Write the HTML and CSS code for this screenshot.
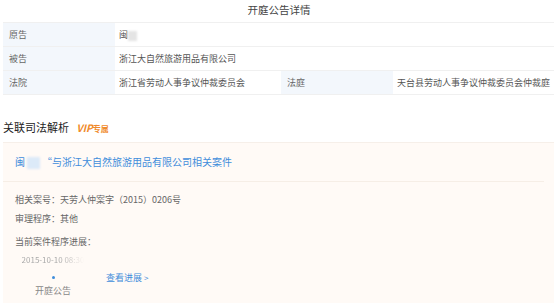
FILE: index.html
```html
<!DOCTYPE html>
<html lang="zh-CN">
<head>
    <meta charset="UTF-8">
    <title>开庭公告详情</title>
    <link rel="stylesheet" href="styles.css">
</head>
<body>
    <h1 class="page-title">开庭公告详情</h1>

    <!-- Party / court table -->
    <div class="info-table">
        <div class="cell label">原告</div>
        <div class="cell value wide">闽<span class="blur"></span></div>

        <div class="cell label">被告</div>
        <div class="cell value wide">浙江大自然旅游用品有限公司</div>

        <div class="cell label">法院</div>
        <div class="cell value">浙江省劳动人事争议仲裁委员会</div>
        <div class="cell label">法庭</div>
        <div class="cell value">天台县劳动人事争议仲裁委员会仲裁庭</div>
    </div>

    <h2 class="section-title">关联司法解析 <span class="vip">VIP<small>专属</small></span></h2>

    <div class="case-card">
        <div class="case-head">闽<span class="blur blue"></span>“与浙江大自然旅游用品有限公司相关案件</div>
        <div class="case-body">
            <p class="line">相关案号：天劳人仲案字（2015）0206号</p>
            <p class="line">审理程序：其他</p>
            <p class="line progress">当前案件程序进展：</p>
            <div class="timeline">
                <div class="step">
                    <span class="date">2015-10-10 08:30</span>
                    <span class="dot"></span>
                    <span class="step-name">开庭公告</span>
                </div>
                <a class="more" href="#">查看进展 <span class="arrow">&gt;</span></a>
            </div>
        </div>
    </div>
</body>
</html>
```

FILE: styles.css
```css
:root {
    --text-color: #333333;
    --muted-color: #666666;
    --line-color: #f0f0f0;
    --label-bg: #f3f7fc;
    --link-color: #3f8ddb;
    --vip-color: #f08a2b;
    --card-bg: #fffaf6;
}

body {
    margin: 0;
    padding: 0 0 0 3px;
    font-family: "Noto Sans CJK SC", "Noto Sans", sans-serif;
    color: var(--text-color);
    background: #ffffff;
    width: 551px;
    overflow: hidden;
}

/* Page heading */
.page-title {
    margin: 0;
    height: 22px;
    line-height: 19px;
    text-align: center;
    font-size: 10.5px;
    font-weight: normal;
    color: #444444;
    padding-left: 1px;
}

/* Info table */
.info-table {
    display: grid;
    grid-template-columns: 112px 166px 112px 1fr;
    border-top: 1px solid var(--line-color);
}

.cell {
    height: 23px;
    line-height: 23px;
    font-size: 9px;
    border-bottom: 1px solid var(--line-color);
    white-space: nowrap;
    overflow: hidden;
}

.label {
    background: var(--label-bg);
    color: var(--muted-color);
    padding-left: 6px;
}

.value {
    color: #555555;
    padding-left: 4px;
}

.wide {
    grid-column: span 3;
}

.blur {
    display: inline-block;
    width: 9px;
    height: 10px;
    vertical-align: middle;
    background: #e4e4e4;
    filter: blur(1px);
}

.blur.blue {
    width: 13px;
    height: 12px;
    margin: 0 2px;
    background: #dceaf8;
}

/* Section heading */
.section-title {
    margin: 23px 0 0;
    height: 24px;
    line-height: 18px;
    font-size: 11px;
    font-weight: normal;
    color: #222222;
}

.vip {
    margin-left: 5px;
    color: var(--vip-color);
    font-weight: bold;
    font-style: italic;
    font-size: 10px;
}

.vip small {
    font-size: 8px;
    font-style: normal;
}

/* Case card */
.case-card {
    background: var(--card-bg);
    border-top: 1px solid #f6efe9;
    height: 170px;
}

.case-head {
    margin: 0 10px 0 0;
    padding-left: 12px;
    height: 38px;
    line-height: 38px;
    font-size: 10px;
    color: var(--link-color);
    border-bottom: 1px solid #f6eee6;
}

.case-body {
    padding: 8px 0 0 12px;
}

.line {
    margin: 0;
    font-size: 9px;
    line-height: 19px;
    color: var(--muted-color);
}

.progress {
    margin-top: 4px;
}

.timeline {
    display: flex;
    align-items: center;
    margin-top: 1px;
}

.step {
    display: flex;
    flex-direction: column;
    align-items: center;
    width: 80px;
    padding-left: 3px;
}

.date {
    font-size: 8px;
    line-height: 15px;
    color: #aaaaaa;
    margin-left: -10px;
    -webkit-mask-image: linear-gradient(to right, #000 60%, transparent);
    mask-image: linear-gradient(to right, #000 60%, transparent);
}

.dot {
    width: 3px;
    height: 3px;
    border-radius: 50%;
    background: var(--link-color);
    margin: 9px 0 4px -10px;
}

.step-name {
    font-size: 9px;
    line-height: 16px;
    color: #888888;
    margin-left: -10px;
}

.more {
    margin: 3px 0 0 8px;
    font-size: 9px;
    color: var(--link-color);
    text-decoration: none;
}

.arrow {
    font-size: 8px;
}
```
